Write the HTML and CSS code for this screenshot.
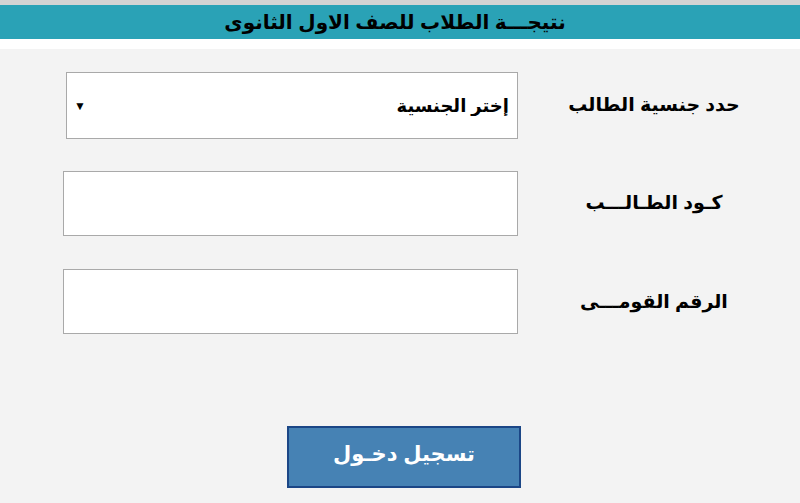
FILE: index.html
```html
<!DOCTYPE html>
<html lang="ar">
<head>
<meta charset="utf-8">
<title>نتيجة الطلاب</title>
<link rel="stylesheet" href="styles.css">
</head>
<body>
<div class="topbar"></div>
<header class="header"><h1 class="title">نتيجـــة الطلاب للصف الاول الثانوى</h1></header>
<div class="strip"></div>
<main class="page">
  <form class="form">
    <div class="row row-select">
      <div class="control select-wrap">
        <select class="field select" dir="rtl">
          <option>إختر الجنسية</option>
          <option>مصرى</option>
          <option>وافد</option>
        </select>
      </div>
      <label class="label">حدد جنسية الطالب</label>
    </div>
    <div class="row row-code">
      <div class="control"><input class="field input" type="text" dir="rtl"></div>
      <label class="label">كـود الطـالـــب</label>
    </div>
    <div class="row row-nid">
      <div class="control"><input class="field input" type="text" dir="rtl"></div>
      <label class="label">الرقم القومـــى</label>
    </div>
    <div class="actions">
      <button type="button" class="btn">تسجيل دخـول</button>
    </div>
  </form>
</main>
</body>
</html>
```
FILE: styles.css
```css
html, body {
  margin: 0;
  padding: 0;
}
body {
  background: #f3f3f3;
  font-family: "Liberation Sans", "DejaVu Sans", sans-serif;
  color: #000;
  width: 800px;
  height: 503px;
  overflow: hidden;
}
.topbar {
  height: 5px;
  background: #d3d3d3;
}
.header {
  height: 34px;
  background: #2aa2b6;
  display: flex;
  align-items: center;
  justify-content: center;
}
.title {
  margin: 0 10px 0 0;
  font-size: 20px;
  font-weight: bold;
  line-height: 34px;
  direction: rtl;
}
.strip {
  height: 10px;
  background: #ffffff;
}
.page {
  padding-top: 23px;
}
.form {
  display: flex;
  flex-direction: column;
}
.row {
  display: grid;
  grid-template-columns: 455px 272px;
  padding-left: 63px;
  align-items: center;
}
.row-code { margin-top: 32px; }
.row-nid { margin-top: 33px; }
.control {
  display: flex;
  position: relative;
}
.field {
  box-sizing: border-box;
  width: 455px;
  height: 65px;
  margin: 0;
  border: 1px solid #a9a9a9;
  background: #ffffff;
  font-family: inherit;
  font-size: 18px;
  font-weight: bold;
  outline: none;
}
.select-wrap {
  padding-left: 3px;
}
.select {
  width: 452px;
  height: 67px;
  appearance: none;
  -webkit-appearance: none;
  padding: 0 8px 0 30px;
  border-radius: 0;
  color: #000;
}
.select-wrap::after {
  content: "\25BC";
  position: absolute;
  left: 11px;
  top: 50%;
  transform: translateY(-50%);
  font-size: 12px;
  color: #000;
  pointer-events: none;
}
.label {
  text-align: center;
  font-size: 19px;
  font-weight: bold;
  direction: rtl;
  margin-top: -3px;
}
.row-nid .label { margin-top: 0; }
.actions {
  margin-top: 92px;
  padding-left: 287px;
  display: flex;
}
.btn {
  width: 234px;
  height: 62px;
  background: #4682b4;
  border: 2px solid #1b4686;
  color: #ffffff;
  font-family: inherit;
  font-size: 21px;
  font-weight: bold;
  padding: 0 0 6px 0;
  direction: rtl;
  cursor: pointer;
}
```
